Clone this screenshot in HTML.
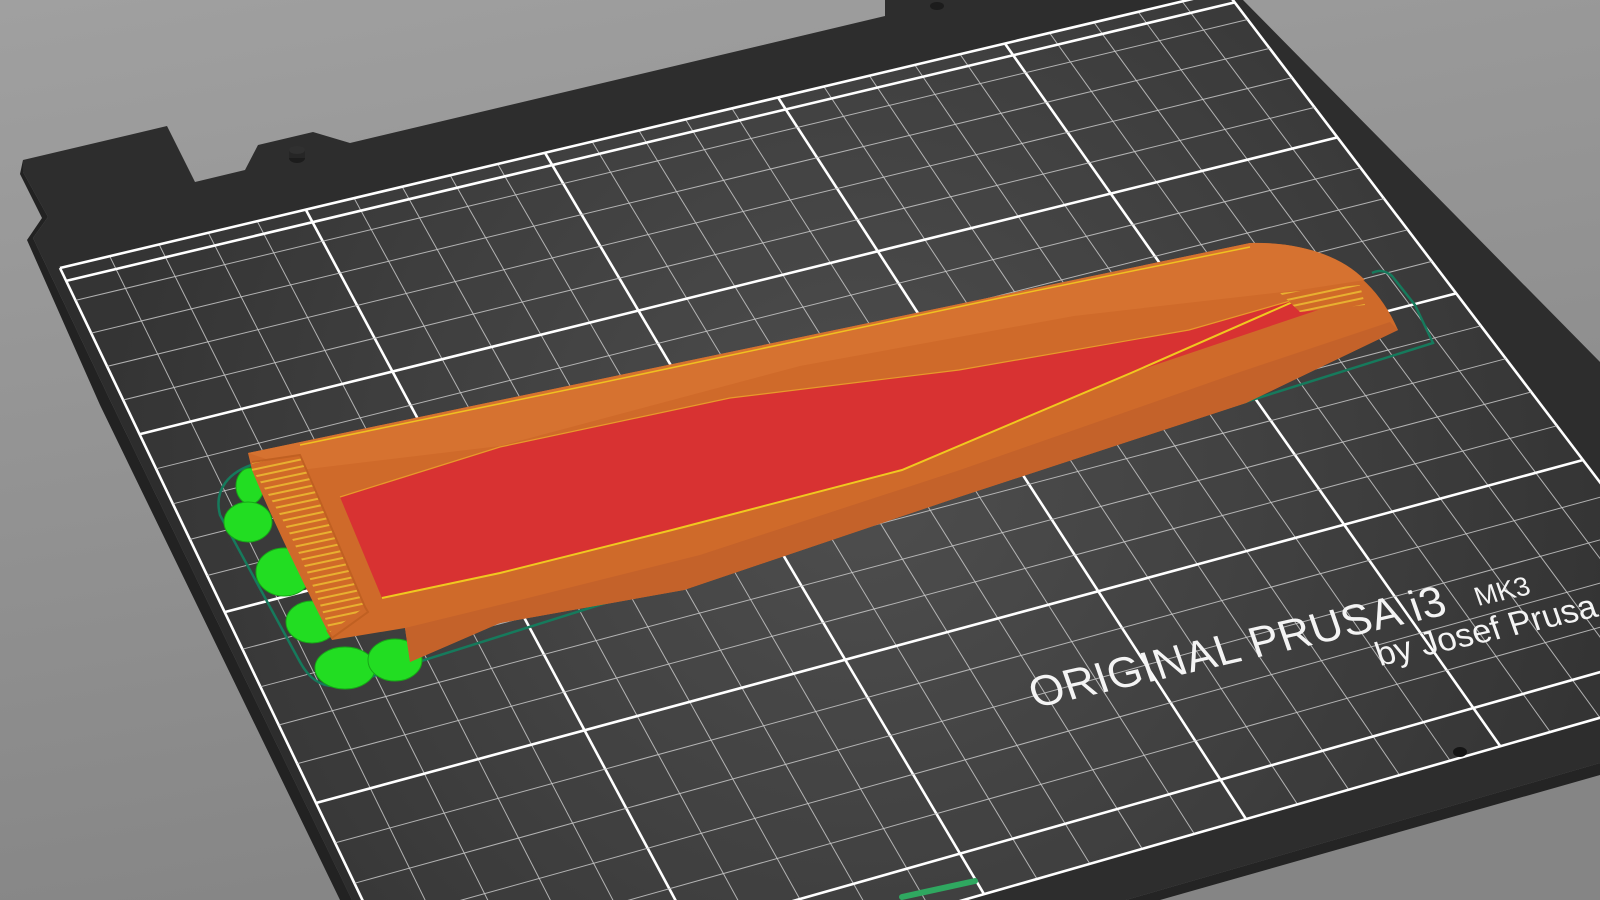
<!DOCTYPE html>
<html><head><meta charset="utf-8">
<style>
html,body{margin:0;padding:0;width:1600px;height:900px;overflow:hidden;background:#909090;}
svg{display:block;overflow:hidden}
</style></head>
<body>
<svg width="1600" height="900" viewBox="0 0 1600 900" xmlns="http://www.w3.org/2000/svg">
<defs>
<linearGradient id="bg" x1="0" y1="0" x2="0.3" y2="1">
<stop offset="0" stop-color="#a0a0a0"/><stop offset="0.6" stop-color="#909090"/><stop offset="1" stop-color="#858585"/>
</linearGradient>
<radialGradient id="sheetg" gradientUnits="userSpaceOnUse" cx="860" cy="480" r="760">
<stop offset="0" stop-color="#4e4e4e"/><stop offset="0.6" stop-color="#3f3f3f"/><stop offset="1" stop-color="#343434"/>
</radialGradient>
<pattern id="ribs" patternUnits="userSpaceOnUse" width="8" height="7" patternTransform="rotate(-12)">
<rect width="8" height="7" fill="#d06a28"/><rect y="0" width="8" height="2" fill="#e8b030"/>
</pattern>
<clipPath id="clipAll"><rect width="1600" height="900"/></clipPath>
</defs>
<g clip-path="url(#clipAll)">
<rect width="1600" height="900" fill="url(#bg)"/>
<polygon fill="#2d2d2d" points="23,160 167,126 195,182 245,170 258,145 313,132 350,143 885,16 885,0 1243,0 1600,362 1600,763 1126,900 352,900 110,400 33,238 48,217 23,172"/>
<polygon fill="#222" points="23,160 23,172 48,217 33,238 110,400 352,900 340,900 100,405 27,240 42,218 20,174"/>
<polygon fill="#242424" points="1126,900 1600,763 1600,775 1160,900"/>
<ellipse cx="297" cy="158" rx="8" ry="5" fill="#1c1c1c"/><rect x="289" y="150" width="16" height="8" fill="#262626"/><ellipse cx="297" cy="150" rx="8" ry="4" fill="#303030"/>
<ellipse cx="937" cy="6" rx="7" ry="4" fill="#1c1c1c"/>
<polygon id="sheet" fill="url(#sheetg)" points=""/>
<g id="grid"></g>
<ellipse cx="1460" cy="752" rx="7" ry="5" fill="#151515"/>
<line x1="902" y1="897" x2="975" y2="881" stroke="#2fa860" stroke-width="6" stroke-linecap="round"/>
<g fill="#f4f4f4" font-family="Liberation Sans, sans-serif">
<text transform="matrix(0.976,-0.222,0.33,0.94,1035,708)" font-size="44" letter-spacing="0.5">ORIGINAL PRUSA i3</text>
<text transform="matrix(0.976,-0.222,0.33,0.94,1478,606)" font-size="27">MK3</text>
<text transform="matrix(0.976,-0.222,0.33,0.94,1380,666)" font-size="34">by Josef Prusa</text>
</g>
<path d="M262,462 C226,470 214,492 220,515 L300,662 C312,684 328,690 348,684 L1433,343 L1415,305 L1392,276 C1385,270 1378,270 1372,273" fill="none" stroke="#167a5c" stroke-width="2.5"/>
<g fill="#22dd22" stroke="#17a817" stroke-width="1">
<ellipse cx="250" cy="486" rx="14" ry="18"/>
<ellipse cx="248" cy="522" rx="24" ry="20"/>
<ellipse cx="284" cy="572" rx="28" ry="24"/>
<ellipse cx="312" cy="622" rx="26" ry="21"/>
<ellipse cx="345" cy="668" rx="30" ry="21"/>
<ellipse cx="395" cy="660" rx="27" ry="21"/>
<ellipse cx="322" cy="482" rx="13" ry="16"/>
<ellipse cx="333" cy="512" rx="11" ry="18"/>
</g>
<path d="M248,453 L1250,243 C1320,241 1372,270 1398,330 L1246,403 L959,497 L684,590 L500,623 L410,662 L405,628 L332,640 L322,620 C292,560 266,505 252,470 Z" fill="#cf6a2a"/>
<path d="M1398,330 L1246,403 L959,497 L684,590 L500,623 L410,662 L405,628 L520,600 L700,555 L960,470 L1240,372 L1390,322 Z" fill="#c4622a"/>
<path d="M248,453 L1250,243 C1300,242 1340,255 1365,280 L1300,290 L1074,316 L800,366 L500,446 L300,470 Z" fill="#d67230"/>
<path d="M340,497 L500,447 L730,398 L959,370 L1189,330 L1304,297 L1318,310 L1131,373 L902,470 L672,530 L500,573 L382,598 Z" fill="#d83232"/>
<path d="M1304,297 L1131,373 L902,470 L672,530 L500,573 L382,598" fill="none" stroke="#f0c820" stroke-width="2"/>
<path d="M340,497 L500,447 L730,398 L959,370 L1189,330 L1304,297" fill="none" stroke="#e89a2a" stroke-width="1.2"/>
<path d="M300,445 L600,383 L1000,298 L1250,247" fill="none" stroke="#f0c020" stroke-width="1.5"/>
<path d="M1280,293 L1360,285 L1365,305 L1300,312 Z" fill="url(#ribs)"/>
<path d="M252,462 L300,455 C320,500 345,560 365,607 L330,632 C312,580 285,515 252,470 Z" fill="url(#ribs)"/>
<path d="M252,462 L300,455 C320,500 345,560 365,607 L368,612 L332,638 L327,630" fill="none" stroke="#c06022" stroke-width="2"/>
</g>
</svg>
<script>
(function(){
var src=[[0,0],[250,0],[0,150],[250,150]], dst=[[60,268],[1226,-9],[316,803],[1583,460]];
var A=[],b=[];
for(var i=0;i<4;i++){var x=src[i][0],y=src[i][1],X=dst[i][0],Y=dst[i][1];
A.push([x,y,1,0,0,0,-X*x,-X*y]);b.push(X);A.push([0,0,0,x,y,1,-Y*x,-Y*y]);b.push(Y);}
var n=8;for(var c=0;c<n;c++){var p=c;for(var r=c+1;r<n;r++)if(Math.abs(A[r][c])>Math.abs(A[p][c]))p=r;
var t=A[c];A[c]=A[p];A[p]=t;t=b[c];b[c]=b[p];b[p]=t;
for(var r=0;r<n;r++){if(r==c)continue;var f=A[r][c]/A[c][c];for(var k=c;k<n;k++)A[r][k]-=f*A[c][k];b[r]-=f*b[c];}}
var h=[];for(var i=0;i<n;i++)h.push(b[i]/A[i][i]);
function P(x,y){var w=h[6]*x+h[7]*y+1;return [(h[0]*x+h[1]*y+h[2])/w,(h[3]*x+h[4]*y+h[5])/w];}
var ns="http://www.w3.org/2000/svg";
var sh=document.getElementById('sheet');
var c4=[P(0,0),P(250,0),P(250,210),P(0,210)];
sh.setAttribute('points',c4.map(function(p){return p[0].toFixed(1)+','+p[1].toFixed(1)}).join(' '));
var g=document.getElementById('grid');
function L(a,b2,major){var l=document.createElementNS(ns,'line');
l.setAttribute('x1',a[0].toFixed(1));l.setAttribute('y1',a[1].toFixed(1));l.setAttribute('x2',b2[0].toFixed(1));l.setAttribute('y2',b2[1].toFixed(1));
l.setAttribute('stroke',major?'#ffffff':'#c8c8c8');l.setAttribute('stroke-width',major?2.6:1);if(!major)l.setAttribute('stroke-opacity','0.85');g.appendChild(l);}
for(var x=0;x<=250;x+=10){L(P(x,0),P(x,210),x%50==0);}
for(var y=0;y<=210;y+=10){L(P(0,y),P(250,y),y%50==0||y==210);}
L(P(0,4),P(250,4),true);
})();
</script>
</body></html>
